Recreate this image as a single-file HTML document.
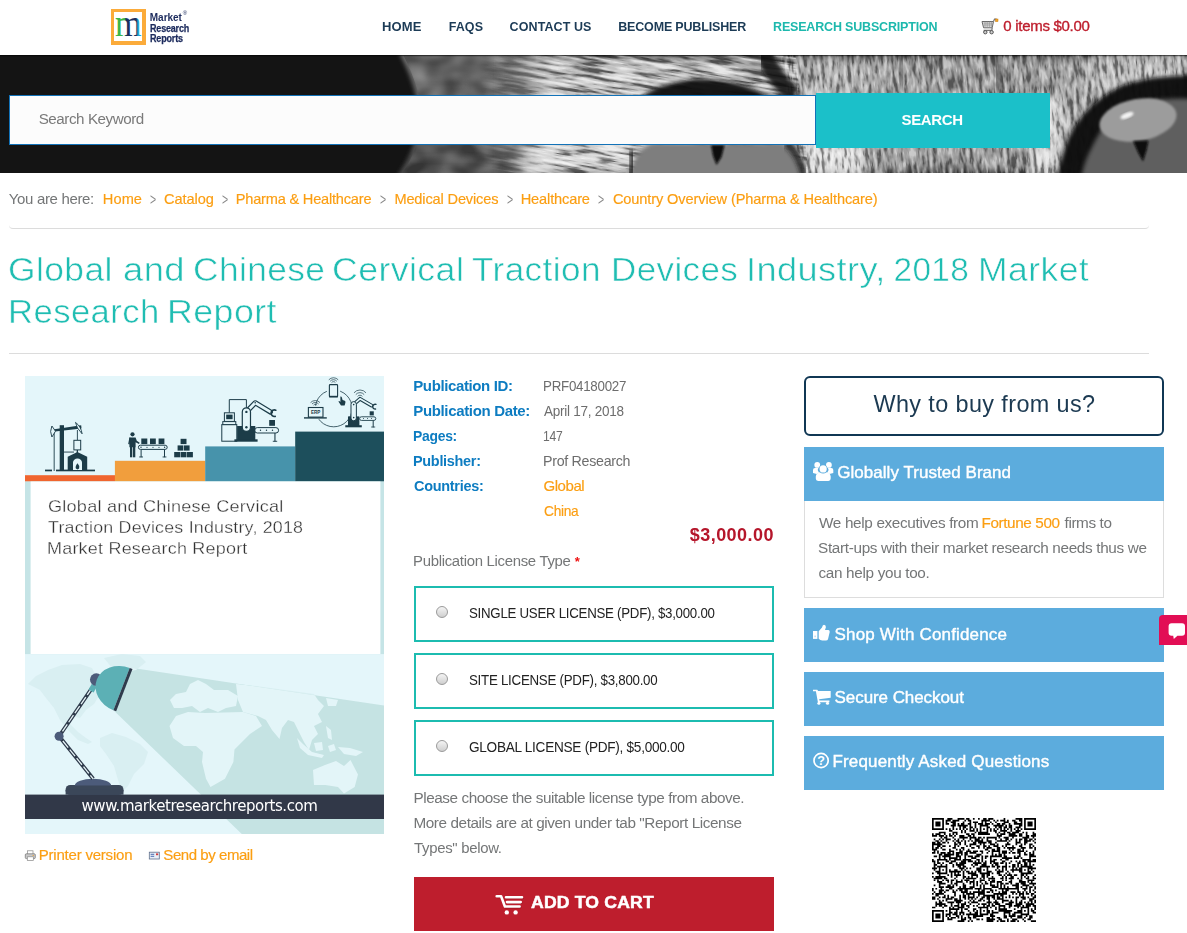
<!DOCTYPE html>
<html lang="en">
<head>
<meta charset="utf-8">
<title>Global and Chinese Cervical Traction Devices Industry, 2018 Market Research Report</title>
<style>
html,body{margin:0;padding:0;background:#fff;}
body{width:1187px;height:933px;position:relative;overflow:hidden;font-family:"Liberation Sans",sans-serif;color:#777;}
.abs{position:absolute;}
.t{position:absolute;white-space:nowrap;line-height:20px;height:20px;display:block;margin:0;padding:0;text-decoration:none;font-weight:normal;}
a.t{cursor:pointer;}
#banner{left:0;top:55px;width:1187px;height:117.5px;background:#141414;overflow:hidden;}
#sinput{left:9px;top:95px;width:805px;height:48px;border:1px solid #1272b8;background:#fcfcfc;}
#sbtn{left:816px;top:93px;width:234px;height:55px;background:#1bc0c9;}
.hr{height:1px;background:#dcdcdc;left:9px;width:1140px;}
.lic{left:414px;width:356px;height:52px;border:2px solid #1cbcb0;background:#fff;}
.radio{width:10px;height:10px;border:1px solid #9a9a9a;border-radius:50%;background:linear-gradient(#f4f4f4,#cfcfcf);left:436px;}
#cartbtn{left:414px;top:876.8px;width:360px;height:54.6px;background:#be1e2d;}
#why{left:804px;top:375.5px;width:356px;height:56.5px;border:2px solid #103754;border-radius:6px;background:#fff;}
.ph{left:804px;width:360px;height:53.5px;background:#5cacdd;}
#pbody{left:804px;top:500.5px;width:358px;height:96px;border:1px solid #ddd;border-top:none;background:#fff;}
#chat{left:1159px;top:615px;width:28px;height:30px;background:#e20e55;border-radius:4px 0 0 0;}
</style>
</head>
<body>
<!-- header -->
<div class="abs" id="logo" style="left:110.8px;top:8.8px;width:34.9px;height:36px;background:#fbab3a;"></div><div class="abs" style="left:114.2px;top:12.2px;width:28.1px;height:29.2px;background:#fff;"></div>
<svg class="abs" style="left:112px;top:8px;" width="34" height="38" viewBox="0 0 34 38">
<defs><linearGradient id="mg" x1="0" x2="1" y1="0" y2="0"><stop offset="0" stop-color="#3bb54a"/><stop offset="0.36" stop-color="#3bb54a"/><stop offset="0.42" stop-color="#1c2f5e"/><stop offset="0.8" stop-color="#1c2f5e"/><stop offset="0.87" stop-color="#1ea7d4"/><stop offset="1" stop-color="#1ea7d4"/></linearGradient></defs>
<text x="2.9" y="27.5" font-family="Liberation Serif, serif" font-size="38.5" fill="url(#mg)" textLength="26.6" lengthAdjust="spacingAndGlyphs">m</text>
</svg>

<svg class="abs" style="left:981px;top:18px;" width="18" height="17" viewBox="0 0 18 17">
<path d="M1 3.5h11.5l-1.300 6.300H2.600z" fill="#dcdcdc" stroke="#6a6a6a" stroke-width="1"/>
<path d="M2.5 5.2h9M2.8 7h8.6M4 3.5v6M6.2 3.5v6M8.4 3.5v6M10.4 3.5v6" stroke="#8f8f8f" stroke-width="0.6"/>
<path d="M12.5 3.5l1-2.3h2.2M11.2 9.8l-0.4 2.5H2.6" fill="none" stroke="#777" stroke-width="1.2"/>
<circle cx="4.3" cy="14.2" r="1.7" fill="#ccc" stroke="#555" stroke-width="1"/><circle cx="10.6" cy="14.2" r="1.7" fill="#ccc" stroke="#555" stroke-width="1"/>
<rect x="14.400" y="1" width="2.600" height="2.600" fill="#f5a623" stroke="#c77a10" stroke-width="0.500"/>
</svg>
<!-- banner -->
<div class="abs" id="banner">
<svg class="abs" style="left:0;top:0;" width="1187" height="118" viewBox="0 0 1187 118">
<defs>
<filter id="furH" x="0" y="0" width="100%" height="100%" color-interpolation-filters="sRGB">
<feTurbulence type="fractalNoise" baseFrequency="0.03 0.26" numOctaves="3" seed="11"/>
<feColorMatrix type="matrix" values="2.6 0 0 0 -0.8  2.6 0 0 0 -0.8  2.6 0 0 0 -0.8  2.6 0 0 0 -0.8"/>
<feComponentTransfer><feFuncR type="table" tableValues="0.05 0.1 0.9 1"/><feFuncG type="table" tableValues="0.05 0.1 0.9 1"/><feFuncB type="table" tableValues="0.05 0.1 0.9 1"/><feFuncA type="table" tableValues="0.6 0.28 0.03 0.28 0.6"/></feComponentTransfer>
<feGaussianBlur stdDeviation="0.45"/>
</filter>
<filter id="furV" x="0" y="0" width="100%" height="100%" color-interpolation-filters="sRGB">
<feTurbulence type="fractalNoise" baseFrequency="0.27 0.06" numOctaves="3" seed="5"/>
<feColorMatrix type="matrix" values="2.6 0 0 0 -0.8  2.6 0 0 0 -0.8  2.6 0 0 0 -0.8  2.6 0 0 0 -0.8"/>
<feComponentTransfer><feFuncR type="table" tableValues="0.05 0.1 0.9 1"/><feFuncG type="table" tableValues="0.05 0.1 0.9 1"/><feFuncB type="table" tableValues="0.05 0.1 0.9 1"/><feFuncA type="table" tableValues="0.5 0.22 0.03 0.2 0.45"/></feComponentTransfer>
<feGaussianBlur stdDeviation="0.45"/>
</filter>
<filter id="mott" x="0" y="0" width="100%" height="100%" color-interpolation-filters="sRGB"><feTurbulence type="fractalNoise" baseFrequency="0.035 0.05" numOctaves="2" seed="3"/><feColorMatrix type="matrix" values="1.6 0 0 0 -0.4  1.6 0 0 0 -0.4  1.6 0 0 0 -0.4  0 0 0 0 1"/></filter><filter id="b2"><feGaussianBlur stdDeviation="2"/></filter>
<filter id="b3"><feGaussianBlur stdDeviation="3"/></filter>
<filter id="b6"><feGaussianBlur stdDeviation="6"/></filter>
<filter id="b1"><feGaussianBlur stdDeviation="1"/></filter>
<linearGradient id="blobG" x1="0" x2="0" y1="0" y2="1"><stop offset="0" stop-color="#707070"/><stop offset="1" stop-color="#4a4a4a"/></linearGradient>
<linearGradient id="furG" x1="0" x2="1" y1="0" y2="0"><stop offset="0" stop-color="#5c5c5c"/><stop offset="0.06" stop-color="#c4c4c4"/><stop offset="0.3" stop-color="#c8c8c8"/><stop offset="0.42" stop-color="#a2a2a2"/><stop offset="0.46" stop-color="#b8b8b8"/><stop offset="0.62" stop-color="#9a9a9a"/><stop offset="0.78" stop-color="#a0a0a0"/><stop offset="1" stop-color="#b4b4b4"/></linearGradient>
<linearGradient id="mHg" x1="0" x2="1" y1="0" y2="0"><stop offset="0" stop-color="#000"/><stop offset="1" stop-color="#fff"/></linearGradient><mask id="cH"><rect x="480" y="-5" width="80" height="130" fill="url(#mHg)"/><path d="M559 -5h236l14 128H559z" fill="#fff"/></mask>
<clipPath id="cB"><path d="M400 -6Q420 30 422 62 420 95 398 124H550V-6z"/></clipPath><clipPath id="cV"><path d="M780 -5h410v128H800z"/></clipPath>
</defs>
<rect width="1187" height="118" fill="#141414"/>
<!-- out-of-focus blob -->
<path d="M397 -6Q417 30 419 62 417 95 395 124H550V-6z" fill="url(#blobG)" filter="url(#b2)"/><g clip-path="url(#cB)"><rect x="396" y="0" width="140" height="118" filter="url(#mott)" opacity="0.3"/></g>
<!-- fur base -->
<rect x="505" y="0" width="682" height="118" fill="url(#furG)" filter="url(#b6)"/>
<rect x="802" y="88" width="62" height="34" fill="#f0f0f0" opacity="0.85" filter="url(#b6)"/><rect x="520" y="92" width="112" height="30" fill="#f0f0f0" opacity="0.6" filter="url(#b6)"/>
<rect x="1030" y="40" width="34" height="90" fill="#f0f0f0" opacity="0.7" filter="url(#b6)"/>
<rect x="1090" y="-6" width="100" height="34" fill="#cfcfcf" opacity="0.6" filter="url(#b6)"/>
<g mask="url(#cH)"><g transform="rotate(9 650 60)"><rect x="460" y="-80" width="400" height="280" filter="url(#furH)"/></g></g>
<g clip-path="url(#cV)"><g transform="rotate(-5 980 60)"><rect x="740" y="-40" width="500" height="200" filter="url(#furV)"/></g></g>
<!-- dark stripes -->
<path d="M764 -4q8 26 30 44" fill="none" stroke="#101010" stroke-width="17" opacity="0.85" filter="url(#b2)"/>
<path d="M1002 -4q-8 18-4 40" fill="none" stroke="#1c1c1c" stroke-width="9" opacity="0.4" filter="url(#b3)"/>
<path d="M900 -4q4 18 0 40" fill="none" stroke="#1c1c1c" stroke-width="9" opacity="0.3" filter="url(#b3)"/>
<!-- left eye -->
<path d="M640 42q20-14 56-18 46 0 76 20v8H640z" fill="#101010" opacity="0.95" filter="url(#b2)"/>
<path d="M632 122q-2-24 20-34h130q18 12 24 34z" fill="#7e7e7e" filter="url(#b2)"/>
<path d="M786 88q14 12 18 32" fill="none" stroke="#1a1a1a" stroke-width="7" opacity="0.85" filter="url(#b2)"/>
<path d="M632 96q2 14-2 26" fill="none" stroke="#1a1a1a" stroke-width="6" opacity="0.8" filter="url(#b2)"/>
<path d="M711 90h13.5l-3 12-5 8-3.5-9z" fill="#0b0b0b" filter="url(#b1)"/>
<!-- right eye -->
<path d="M1195 20q-40 0-72 10-38 18-54 52-8 18-12 40h138z" fill="#0c0c0c" opacity="0.97" filter="url(#b2)"/>
<path d="M1195 44q-36-2-66 6-24 14-36 40-8 14-12 32h114z" fill="#5e5e5e" filter="url(#b2)"/>
<ellipse cx="1138" cy="65" rx="39" ry="21" fill="#9c9c9c" filter="url(#b1)" transform="rotate(-10 1138 65)"/>
<ellipse cx="1127" cy="60.5" rx="7" ry="2.8" fill="#f4f4f4" filter="url(#b1)" transform="rotate(-22 1127 60.5)"/>
<path d="M1133 86l15.5-.5-2 10-3.5 11-5-9z" fill="#090909" filter="url(#b1)"/>
<rect x="0" y="0" width="1187" height="1.2" fill="#000" opacity="0.55"/>
</svg>

</div>
<div class="abs" id="sinput"></div>
<div class="abs" id="sbtn"></div>
<!-- breadcrumb rules -->
<div class="abs" style="left:9px;top:223px;width:1140px;height:5px;border-bottom:1px solid #dcdcdc;border-radius:0 0 4px 4px;box-sizing:content-box;"></div>
<div class="abs hr" style="top:353.2px;"></div>
<!-- product image -->
<svg class="abs" style="left:25px;top:376px;" width="359.2" height="458" viewBox="25 376 359.2 458">
<defs>
<clipPath id="cone"><path d="M129.5 667.6L384.2 705.6V834H241.8L114 710.8z"/></clipPath>
<g id="land">
<path d="M28 684l8-8 12-6 14-5 18-1 12 4 4 8 8 4 6 10-10 4-6 10-8 6-6 8-8-2-2 8 8 8 8 6 6 4-4 2-10-4-10-10-8-10-6-12-8-10-6-8z"/>
<path d="M104 658l18-4 18 2 6 6-10 8-12 2-12-4z"/>
<path d="M100 738l12-5 14 4 14 7 8 8-4 12-10 10-6 12-6 6-4-12-4-14-8-12-6-8z"/>
<path d="M170 700l6-6 10-2 4-8 8-4 8 4 8 6h14l10 6-2 10-10 2-8 4-10-4-8 4-8-6-10 2-8 0z"/>
<path d="M176 716l12-4 17 1 38-1 13 4 6 10-12 8-10 10-5.500 5.500-1.100 12.500-8.400 16.800-14.500 8.300-4.500-8.300-4-16.800 1-10-7-6h-12l-11-8-3.500-12z"/>
<path d="M236 684l20 2 58 8 4 6 6 6-6 8 4 8-8 4 4 8-6 6-3 10-5-8-6-12-4-8-6-2-6 8-2.500 11-7.500-9-6-10-8-4-15-4-5-12z"/>
<path d="M326 698l12 2-2 6h-8z"/><path d="M326 726l5 4 1 10-4-2z"/>
<path d="M297 738l6 6 9 8 12 3-2 3-14-3-8-7z"/><path d="M314 743l8-1 1 8-7 1z"/><path d="M328 746l6-2 2 6-6 2z"/><path d="M338 747l12 1 13 4-7 4-12-2z"/>
<path d="M313 770l12-5 11-4 8 5 6.500-6 7.500 14.600-3.300 12.400-10.700 6.400-6-6.400-12.600-2-11.400 0z"/>
</g>
</defs>
<rect x="25" y="376" width="359.2" height="458" fill="#e4f6fa"/>
<!-- steps -->
<rect x="25" y="475.2" width="90" height="6.4" fill="#f0652f"/>
<rect x="114.9" y="460.8" width="90.4" height="20.8" fill="#f19e3d"/>
<rect x="205.2" y="446.4" width="90.1" height="35.2" fill="#4793ab"/>
<rect x="295.2" y="431.6" width="89" height="50" fill="#1d4f5c"/>
<!-- white panel -->
<rect x="25" y="481.5" width="359.2" height="172.6" fill="#c5e4e6"/>
<rect x="30.6" y="481.5" width="349.8" height="172.5" fill="#fff"/>
<!-- pump jack -->
<g fill="#1c3c48" stroke="none">
<rect x="45" y="469.6" width="7" height="1.7"/><rect x="56" y="469.6" width="39" height="1.7"/>
<rect x="53.7" y="430.5" width="0.9" height="40.5"/>
<rect x="59.7" y="425.2" width="4.3" height="45.3"/>
<path d="M52.6 429.6l28.6-4.4.3 3.2-28.6 3.4z"/>
<rect x="64" y="451.6" width="10" height="0.9"/>
<rect x="76.9" y="430" width="0.9" height="10"/>
<rect x="76.7" y="450" width="1.3" height="3.5"/>
<path d="M67.7 470.3v-13.6l9.7-4.6 9.8 4.6v13.6z"/>
</g>
<path d="M55.5 431.2l-3.6-5.2q-2.6 5.4 0 11z" fill="#e4f6fa" stroke="#1c3c48" stroke-width="0.9" stroke-linejoin="round"/>
<path d="M77.5 428l-2-5.6q5.6 4 6.6 11.4z" fill="#e4f6fa" stroke="#1c3c48" stroke-width="0.9" stroke-linejoin="round"/>
<rect x="73.9" y="440.3" width="6.8" height="9.6" fill="#e4f6fa" stroke="#1c3c48" stroke-width="1"/>
<path d="M73 470v-7.5a4.5 4 0 0 1 9 0v7.5z" fill="#e4f6fa"/>
<path d="M77.5 463.2q2.6 2.6 1.6 5.4-1.6 1.6-3.2 0-1-2 1.6-5.4z" fill="#1c3c48"/>
<!-- worker + conveyor -->
<g fill="#1c3c48">
<circle cx="132.5" cy="434.3" r="2.1"/>
<path d="M129.4 437.4h6.2l1.2 3.4 2.9 2-.7 1.2-3.4-1.7v5h-6.2z"/>
<path d="M128.2 444l1.2-6.6 1.2.4-1 6.6z"/>
<rect x="130" y="447" width="2.3" height="10.3"/><rect x="133" y="447" width="2.3" height="10.3"/>
<rect x="141.3" y="438.5" width="6" height="5.6"/><rect x="150" y="438.5" width="5.8" height="5.6"/><rect x="158.6" y="438.5" width="5.8" height="5.6"/>
<rect x="140.6" y="449.6" width="1" height="7.6"/><rect x="164" y="449.6" width="1" height="7.6"/>
<rect x="139.2" y="456.5" width="3.8" height="0.9"/><rect x="162.6" y="456.5" width="3.8" height="0.9"/>
<rect x="180.6" y="438.8" width="5.9" height="5.3"/>
<rect x="177.6" y="445.4" width="5.7" height="5.2"/><rect x="183.9" y="445.4" width="5.7" height="5.2"/>
<rect x="174.2" y="452" width="5.9" height="5.3"/><rect x="180.6" y="452" width="5.9" height="5.3"/><rect x="187" y="452" width="5.9" height="5.3"/>
</g>
<rect x="138.4" y="445.2" width="28.8" height="4.2" rx="2.1" fill="#e4f6fa" stroke="#1c3c48" stroke-width="1"/>
<g fill="#1c3c48"><circle cx="141" cy="447.3" r="0.7"/><circle cx="147" cy="447.3" r="0.6"/><circle cx="153" cy="447.3" r="0.6"/><circle cx="159" cy="447.3" r="0.6"/><circle cx="164.6" cy="447.3" r="0.7"/></g>
<!-- robot station 1 -->
<g fill="#e4f6fa" stroke="#1c3c48" stroke-width="1">
<rect x="221.8" y="424.6" width="15" height="16.6"/>
<rect x="222.8" y="421.6" width="13" height="3"/>
<rect x="224.4" y="412.8" width="10" height="8.6"/>
<path d="M229.3 412.6v-13h17.1v9" fill="none"/>
<rect x="254.6" y="427.6" width="24" height="5.4" rx="2.7"/>
</g>
<g fill="#1c3c48">
<rect x="226.2" y="414.6" width="6.4" height="4.6"/>
<rect x="237.1" y="426" width="18.2" height="14.4"/>
<rect x="234.4" y="439.3" width="23.2" height="2.4"/>
<rect x="269.2" y="420" width="5.8" height="5.8"/>
<rect x="274.4" y="433" width="1.1" height="8.6"/><rect x="272.8" y="440.8" width="4.4" height="0.9"/>
<circle cx="260.5" cy="430.3" r="0.7"/><circle cx="266.5" cy="430.3" r="0.7"/><circle cx="272.5" cy="430.3" r="0.7"/>
</g>
<g fill="none" stroke-linecap="round" stroke-linejoin="round">
<path d="M246.4 411.9l8.8-9.1 15.2 9.1" stroke="#1c3c48" stroke-width="5.2"/>
<path d="M246.4 411.9l8.8-9.1 15.2 9.1" stroke="#e4f6fa" stroke-width="2.8"/>
<path d="M275.8 410.2a3.3 3.3 0 1 0-.6 6.2" stroke="#1c3c48" stroke-width="1.7"/>
</g>
<rect x="242.3" y="407.8" width="8.2" height="23.6" rx="4.1" fill="#e4f6fa" stroke="#1c3c48" stroke-width="1.2"/>
<circle cx="246.4" cy="411.9" r="1.2" fill="#1c3c48"/><circle cx="246.4" cy="427.3" r="1.2" fill="#1c3c48"/><circle cx="255.2" cy="402.8" r="0.8" fill="#1c3c48"/>
<!-- IoT group -->
<circle cx="333.7" cy="408.4" r="18.4" fill="none" stroke="#1c3c48" stroke-width="0.8"/>
<rect x="327" y="382" width="13" height="17.4" fill="#e4f6fa"/>
<rect x="329.4" y="384.6" width="8.2" height="12.2" rx="0.8" fill="#e4f6fa" stroke="#1c3c48" stroke-width="1.1"/>
<rect x="329" y="395.8" width="9" height="1.6" fill="#1c3c48"/>
<g fill="none" stroke="#1c3c48" stroke-width="0.7">
<path d="M331.6 382.6a2.4 2.4 0 0 1 3.8 0M330.2 381.2a4.4 4.4 0 0 1 6.6 0M328.8 379.8a6.4 6.4 0 0 1 9.4 0"/>
<path d="M313.4 405.4a2.4 2.4 0 0 1 3.8 0M312 404a4.4 4.4 0 0 1 6.6 0M310.6 402.6a6.4 6.4 0 0 1 9.4 0"/>
<path d="M357.6 396.4a3 3 0 0 1 4.8 0M355.8 394.6a5.4 5.4 0 0 1 8.4 0M354 392.8a7.8 7.8 0 0 1 12 0"/>
</g>
<path d="M340.4 396.6q1-.6 1.4.6l.8 2.8 2.2.8q1 .6.6 2l-.8 2.6h-3.6l-2.4-3.6q-.2-1 1-.6l.8.8z" fill="#1c3c48"/>
<rect x="306" y="405.6" width="19.4" height="13.6" fill="#e4f6fa"/>
<rect x="308.4" y="407.5" width="14.6" height="9.6" fill="#e4f6fa" stroke="#1c3c48" stroke-width="1.1"/>
<rect x="304" y="417.2" width="22.8" height="1.4" fill="#1c3c48"/>
<text x="315.7" y="414.2" font-family="Liberation Sans, sans-serif" font-size="4.6" font-weight="bold" fill="#1c3c48" text-anchor="middle">ERP</text>
<g fill="#1c3c48">
<rect x="348" y="416.4" width="11.4" height="9.8"/><rect x="345.3" y="425.2" width="16.5" height="2.1"/>
<rect x="369.7" y="411.3" width="4.1" height="4.1"/>
<rect x="372.7" y="420.2" width="1" height="7.2"/><rect x="371.2" y="426.6" width="4" height="0.8"/>
</g>
<rect x="359.6" y="416.8" width="16.2" height="3.6" rx="1.8" fill="#e4f6fa" stroke="#1c3c48" stroke-width="0.9"/>
<g fill="#1c3c48"><circle cx="363.6" cy="418.6" r="0.5"/><circle cx="367.6" cy="418.6" r="0.5"/><circle cx="371.6" cy="418.6" r="0.5"/></g>
<g fill="none" stroke-linecap="round" stroke-linejoin="round">
<path d="M353.7 404.4l6.3-5.6 11.6 6.8" stroke="#1c3c48" stroke-width="3.8"/>
<path d="M353.7 404.4l6.3-5.6 11.6 6.8" stroke="#e4f6fa" stroke-width="1.7"/>
<path d="M376 404.4a2.4 2.4 0 1 0-.4 4.6" stroke="#1c3c48" stroke-width="1.3"/>
</g>
<rect x="351" y="401.6" width="5.4" height="19.2" rx="2.7" fill="#e4f6fa" stroke="#1c3c48" stroke-width="1"/>
<circle cx="353.7" cy="404.6" r="0.8" fill="#1c3c48"/><circle cx="353.7" cy="417.6" r="0.8" fill="#1c3c48"/>
<!-- bottom: map + lamp -->
<use href="#land" fill="#d9eff2"/>
<path d="M129.5 667.6L384.2 705.6V834H241.8L114 710.8z" fill="#c5e3e3"/>
<g clip-path="url(#cone)"><use href="#land" fill="#e3f5f8"/></g>
<rect x="25" y="794.6" width="359.2" height="24.4" fill="#313848"/>
<rect x="65.6" y="785" width="57.9" height="10" rx="4.6" fill="#3b4759"/>
<rect x="65.6" y="790" width="57.9" height="4.7" fill="#3b4759"/>
<path d="M74.8 785.6a18.2 6.9 0 0 1 36.4 0z" fill="#4c5b7a"/>
<g fill="none">
<path d="M59.1 736.3L93.2 778.8M59.1 736.3L92.1 687.9" stroke="#2f3b4c" stroke-width="3.8"/>
<path d="M59.1 736.3L93.2 778.8M59.1 736.3L92.1 687.9" stroke="#e6f3f6" stroke-width="1.3" stroke-dasharray="8.5 2.5" stroke-dashoffset="-6"/>
</g>
<circle cx="59.1" cy="736.3" r="4.5" fill="#4c5b7a"/>
<path d="M88.6 689.4l3.2-5.6 5 3-3.2 5.6z" fill="#5cb0b5"/>
<circle cx="96.3" cy="679.6" r="6.3" fill="#4c5b7a"/>
<path d="M129.700 668A26.500 22.600 21.100 0 0 113.400 710.200z" fill="#5cb0b5"/>
<path d="M129.7 668l-2.8-1.1-16.3 42.2 2.8 1.1z" fill="#2f3b4c" transform="translate(2.8,1.1)"/>
</svg>

<!-- license boxes -->
<div class="abs lic" style="top:586.4px;"></div>
<div class="abs lic" style="top:653.2px;"></div>
<div class="abs lic" style="top:720.2px;"></div>
<div class="abs radio" style="top:606.3px;"></div>
<div class="abs radio" style="top:673.3px;"></div>
<div class="abs radio" style="top:740.3px;"></div>
<div class="abs" id="cartbtn"></div>
<!-- right column -->
<div class="abs" id="why"></div>
<div class="abs ph" style="top:447px;"></div>
<div class="abs" id="pbody"></div>
<div class="abs ph" style="top:608px;"></div>
<div class="abs ph" style="top:672px;"></div>
<div class="abs ph" style="top:736px;"></div>
<svg class="abs" style="left:0;top:0;pointer-events:none;" width="1187" height="933" viewBox="0 0 1187 933">
<!-- users -->
<g fill="#fff">
<circle cx="817.25" cy="464.95" r="2.9"/><circle cx="828.9" cy="464.95" r="2.9"/>
<path d="M813 472.9v-3a2 2 0 0 1 2-2h3.4q-1.6 2.4 1 4.6-1.6.2-2.6 1.4z"/>
<path d="M833.3 472.9v-3a2 2 0 0 0-2-2h-3.4q1.6 2.4-1 4.6 1.6.2 2.6 1.400z"/>
<circle cx="823.15" cy="468.9" r="4.1" fill="#5cacdd"/>
<circle cx="823.15" cy="468.9" r="3.6"/>
<path d="M815.8 478.6v-2.200q.6-3.600 3.800-4.200 3.500 2.700 7.100 0 3.400.6 4 4.200v2.200a2.300 2.300 0 0 1-2.300 2.300h-10.300a2.300 2.300 0 0 1-2.300-2.300z"/>
<!-- thumbs up -->
<rect x="813" y="631" width="4.400" height="7.900"/>
<path d="M818.700 631.300l3.300-3.800q.500-2.800 2-2.800 2 .3 1.900 2.600l-.9 2.600h3.500q1.500.4 1.200 2.100l-1.700 7.200q-.5 1.300-2.100 1.300h-3.700q-2-.3-3.500-1.700z"/>
<!-- cart -->
<path d="M813 689.700h4.300l.8 1.400h12.600v6.700l-11.600 1.400.3 1.400h10v1.600h-11.500l-2-11h-2.900z"/>
<circle cx="818.900" cy="703.300" r="1.550"/><circle cx="827.500" cy="703.300" r="1.550"/>
</g>
<rect x="814.600" y="635.600" width="1" height="1.600" fill="#5cacdd" opacity="0.6"/>
<!-- question circle -->
<circle cx="821.100" cy="760.500" r="7.100" fill="none" stroke="#fff" stroke-width="1.700"/>
<text x="821.100" y="765.200" font-family="Liberation Sans, sans-serif" font-size="12.500" font-weight="bold" fill="#fff" text-anchor="middle">?</text>
<!-- add to cart icon -->
<g fill="none" stroke="#7d0f1a" stroke-opacity="0.55" stroke-width="2.400" stroke-linecap="round" stroke-linejoin="round" transform="translate(0.5,0.8)">
<path d="M496.700 896.200h4.400l3.800 10.300h14.700M506 897.300h16M507 902.100h13.700"/>
</g>
<g fill="none" stroke="#fff" stroke-width="2.600" stroke-linecap="round" stroke-linejoin="round">
<path d="M496.700 896.200h4.400l3.800 10.300h14.700M506 897.300h16M507 902.100h13.700"/>
</g>
<circle cx="506.800" cy="912.400" r="2.200" fill="#fff"/><circle cx="515.600" cy="912.400" r="2.200" fill="#fff"/>
<!-- printer icon -->
<g>
<rect x="27.500" y="850.800" width="5.500" height="3.600" fill="#fff" stroke="#8a8a8a" stroke-width="0.700"/>
<rect x="25.300" y="853.800" width="10" height="4.800" rx="1" fill="#c9c9c9" stroke="#6f6f6f" stroke-width="0.700"/>
<rect x="27.300" y="856.800" width="6" height="3.800" fill="#fff" stroke="#8a8a8a" stroke-width="0.700"/>
<rect x="32.600" y="855" width="1.300" height="0.900" fill="#e9a23b"/>
</g>
<!-- mail icon -->
<g>
<rect x="149.300" y="852.200" width="10" height="6.800" fill="#e8eef7" stroke="#5f6f8c" stroke-width="0.800"/>
<rect x="150.600" y="853.800" width="3.600" height="1" fill="#4b6cb0"/><rect x="150.600" y="855.800" width="3.600" height="1" fill="#4b6cb0"/>
<rect x="156" y="853.400" width="2.200" height="1.800" fill="#d23a3a"/>
</g>
</svg>

<svg class="abs" style="left:932px;top:818px;" width="104" height="104" viewBox="0 0 104 104"><rect width="104" height="104" fill="#fff"/><path fill="#000" d="M0.00 0.00h11.93v1.70h-11.93zM15.34 0.00h5.11v1.70h-5.11zM25.57 0.00h6.82v1.70h-6.82zM34.10 0.00h3.41v1.70h-3.41zM40.92 0.00h1.70v1.70h-1.70zM46.03 0.00h1.70v1.70h-1.70zM51.15 0.00h3.41v1.70h-3.41zM56.26 0.00h5.11v1.70h-5.11zM71.61 0.00h1.70v1.70h-1.70zM83.54 0.00h6.82v1.70h-6.82zM92.07 0.00h11.93v1.70h-11.93zM0.00 1.70h1.70v1.70h-1.70zM10.23 1.70h1.70v1.70h-1.70zM13.64 1.70h5.11v1.70h-5.11zM20.46 1.70h6.82v1.70h-6.82zM32.39 1.70h1.70v1.70h-1.70zM35.80 1.70h3.41v1.70h-3.41zM49.44 1.70h8.52v1.70h-8.52zM61.38 1.70h1.70v1.70h-1.70zM64.79 1.70h1.70v1.70h-1.70zM68.20 1.70h5.11v1.70h-5.11zM75.02 1.70h1.70v1.70h-1.70zM80.13 1.70h3.41v1.70h-3.41zM86.95 1.70h3.41v1.70h-3.41zM92.07 1.70h1.70v1.70h-1.70zM102.30 1.70h1.70v1.70h-1.70zM0.00 3.41h1.70v1.70h-1.70zM3.41 3.41h5.11v1.70h-5.11zM10.23 3.41h1.70v1.70h-1.70zM13.64 3.41h1.70v1.70h-1.70zM18.75 3.41h5.11v1.70h-5.11zM30.69 3.41h1.70v1.70h-1.70zM37.51 3.41h1.70v1.70h-1.70zM40.92 3.41h5.11v1.70h-5.11zM49.44 3.41h1.70v1.70h-1.70zM52.85 3.41h1.70v1.70h-1.70zM57.97 3.41h1.70v1.70h-1.70zM63.08 3.41h1.70v1.70h-1.70zM71.61 3.41h5.11v1.70h-5.11zM81.84 3.41h3.41v1.70h-3.41zM88.66 3.41h1.70v1.70h-1.70zM92.07 3.41h1.70v1.70h-1.70zM95.48 3.41h5.11v1.70h-5.11zM102.30 3.41h1.70v1.70h-1.70zM0.00 5.11h1.70v1.70h-1.70zM3.41 5.11h5.11v1.70h-5.11zM10.23 5.11h1.70v1.70h-1.70zM13.64 5.11h3.41v1.70h-3.41zM20.46 5.11h3.41v1.70h-3.41zM25.57 5.11h1.70v1.70h-1.70zM28.98 5.11h3.41v1.70h-3.41zM35.80 5.11h3.41v1.70h-3.41zM42.62 5.11h1.70v1.70h-1.70zM46.03 5.11h5.11v1.70h-5.11zM52.85 5.11h5.11v1.70h-5.11zM59.67 5.11h1.70v1.70h-1.70zM64.79 5.11h3.41v1.70h-3.41zM69.90 5.11h3.41v1.70h-3.41zM76.72 5.11h1.70v1.70h-1.70zM81.84 5.11h8.52v1.70h-8.52zM92.07 5.11h1.70v1.70h-1.70zM95.48 5.11h5.11v1.70h-5.11zM102.30 5.11h1.70v1.70h-1.70zM0.00 6.82h1.70v1.70h-1.70zM3.41 6.82h5.11v1.70h-5.11zM10.23 6.82h1.70v1.70h-1.70zM18.75 6.82h5.11v1.70h-5.11zM25.57 6.82h10.23v1.70h-10.23zM37.51 6.82h1.70v1.70h-1.70zM42.62 6.82h1.70v1.70h-1.70zM47.74 6.82h8.52v1.70h-8.52zM61.38 6.82h10.23v1.70h-10.23zM73.31 6.82h1.70v1.70h-1.70zM76.72 6.82h3.41v1.70h-3.41zM86.95 6.82h3.41v1.70h-3.41zM92.07 6.82h1.70v1.70h-1.70zM95.48 6.82h5.11v1.70h-5.11zM102.30 6.82h1.70v1.70h-1.70zM0.00 8.52h1.70v1.70h-1.70zM10.23 8.52h1.70v1.70h-1.70zM20.46 8.52h1.70v1.70h-1.70zM27.28 8.52h1.70v1.70h-1.70zM30.69 8.52h3.41v1.70h-3.41zM37.51 8.52h3.41v1.70h-3.41zM42.62 8.52h1.70v1.70h-1.70zM47.74 8.52h1.70v1.70h-1.70zM54.56 8.52h3.41v1.70h-3.41zM63.08 8.52h1.70v1.70h-1.70zM66.49 8.52h3.41v1.70h-3.41zM71.61 8.52h3.41v1.70h-3.41zM76.72 8.52h3.41v1.70h-3.41zM83.54 8.52h5.11v1.70h-5.11zM92.07 8.52h1.70v1.70h-1.70zM102.30 8.52h1.70v1.70h-1.70zM0.00 10.23h11.93v1.70h-11.93zM13.64 10.23h1.70v1.70h-1.70zM17.05 10.23h1.70v1.70h-1.70zM20.46 10.23h1.70v1.70h-1.70zM23.87 10.23h1.70v1.70h-1.70zM27.28 10.23h1.70v1.70h-1.70zM30.69 10.23h1.70v1.70h-1.70zM34.10 10.23h1.70v1.70h-1.70zM37.51 10.23h1.70v1.70h-1.70zM40.92 10.23h1.70v1.70h-1.70zM44.33 10.23h1.70v1.70h-1.70zM47.74 10.23h1.70v1.70h-1.70zM51.15 10.23h1.70v1.70h-1.70zM54.56 10.23h1.70v1.70h-1.70zM57.97 10.23h1.70v1.70h-1.70zM61.38 10.23h1.70v1.70h-1.70zM64.79 10.23h1.70v1.70h-1.70zM68.20 10.23h1.70v1.70h-1.70zM71.61 10.23h1.70v1.70h-1.70zM75.02 10.23h1.70v1.70h-1.70zM78.43 10.23h1.70v1.70h-1.70zM81.84 10.23h1.70v1.70h-1.70zM85.25 10.23h1.70v1.70h-1.70zM88.66 10.23h1.70v1.70h-1.70zM92.07 10.23h11.93v1.70h-11.93zM17.05 11.93h3.41v1.70h-3.41zM28.98 11.93h1.70v1.70h-1.70zM32.39 11.93h1.70v1.70h-1.70zM37.51 11.93h5.11v1.70h-5.11zM44.33 11.93h1.70v1.70h-1.70zM47.74 11.93h1.70v1.70h-1.70zM54.56 11.93h1.70v1.70h-1.70zM57.97 11.93h1.70v1.70h-1.70zM61.38 11.93h3.41v1.70h-3.41zM68.20 11.93h6.82v1.70h-6.82zM78.43 11.93h1.70v1.70h-1.70zM83.54 11.93h5.11v1.70h-5.11zM6.82 13.64h6.82v1.70h-6.82zM20.46 13.64h5.11v1.70h-5.11zM28.98 13.64h1.70v1.70h-1.70zM32.39 13.64h1.70v1.70h-1.70zM42.62 13.64h1.70v1.70h-1.70zM46.03 13.64h10.23v1.70h-10.23zM63.08 13.64h1.70v1.70h-1.70zM66.49 13.64h1.70v1.70h-1.70zM71.61 13.64h1.70v1.70h-1.70zM75.02 13.64h3.41v1.70h-3.41zM80.13 13.64h6.82v1.70h-6.82zM90.36 13.64h1.70v1.70h-1.70zM93.77 13.64h1.70v1.70h-1.70zM100.59 13.64h1.70v1.70h-1.70zM0.00 15.34h1.70v1.70h-1.70zM3.41 15.34h5.11v1.70h-5.11zM11.93 15.34h1.70v1.70h-1.70zM17.05 15.34h1.70v1.70h-1.70zM20.46 15.34h1.70v1.70h-1.70zM23.87 15.34h1.70v1.70h-1.70zM34.10 15.34h3.41v1.70h-3.41zM39.21 15.34h3.41v1.70h-3.41zM46.03 15.34h11.93v1.70h-11.93zM64.79 15.34h1.70v1.70h-1.70zM68.20 15.34h5.11v1.70h-5.11zM76.72 15.34h6.82v1.70h-6.82zM86.95 15.34h3.41v1.70h-3.41zM93.77 15.34h1.70v1.70h-1.70zM100.59 15.34h3.41v1.70h-3.41zM0.00 17.05h5.11v1.70h-5.11zM6.82 17.05h5.11v1.70h-5.11zM13.64 17.05h1.70v1.70h-1.70zM17.05 17.05h3.41v1.70h-3.41zM22.16 17.05h1.70v1.70h-1.70zM27.28 17.05h5.11v1.70h-5.11zM35.80 17.05h3.41v1.70h-3.41zM40.92 17.05h1.70v1.70h-1.70zM64.79 17.05h5.11v1.70h-5.11zM76.72 17.05h8.52v1.70h-8.52zM86.95 17.05h3.41v1.70h-3.41zM93.77 17.05h3.41v1.70h-3.41zM98.89 17.05h5.11v1.70h-5.11zM8.52 18.75h1.70v1.70h-1.70zM11.93 18.75h3.41v1.70h-3.41zM20.46 18.75h1.70v1.70h-1.70zM27.28 18.75h8.52v1.70h-8.52zM37.51 18.75h6.82v1.70h-6.82zM46.03 18.75h3.41v1.70h-3.41zM51.15 18.75h1.70v1.70h-1.70zM54.56 18.75h10.23v1.70h-10.23zM66.49 18.75h1.70v1.70h-1.70zM71.61 18.75h5.11v1.70h-5.11zM80.13 18.75h1.70v1.70h-1.70zM90.36 18.75h6.82v1.70h-6.82zM100.59 18.75h1.70v1.70h-1.70zM1.70 20.46h1.70v1.70h-1.70zM6.82 20.46h1.70v1.70h-1.70zM10.23 20.46h1.70v1.70h-1.70zM13.64 20.46h5.11v1.70h-5.11zM22.16 20.46h1.70v1.70h-1.70zM25.57 20.46h1.70v1.70h-1.70zM30.69 20.46h1.70v1.70h-1.70zM37.51 20.46h1.70v1.70h-1.70zM42.62 20.46h5.11v1.70h-5.11zM49.44 20.46h1.70v1.70h-1.70zM54.56 20.46h1.70v1.70h-1.70zM63.08 20.46h1.70v1.70h-1.70zM68.20 20.46h1.70v1.70h-1.70zM73.31 20.46h3.41v1.70h-3.41zM78.43 20.46h1.70v1.70h-1.70zM83.54 20.46h1.70v1.70h-1.70zM86.95 20.46h3.41v1.70h-3.41zM92.07 20.46h3.41v1.70h-3.41zM97.18 20.46h3.41v1.70h-3.41zM102.30 20.46h1.70v1.70h-1.70zM3.41 22.16h3.41v1.70h-3.41zM8.52 22.16h1.70v1.70h-1.70zM13.64 22.16h1.70v1.70h-1.70zM20.46 22.16h1.70v1.70h-1.70zM23.87 22.16h3.41v1.70h-3.41zM28.98 22.16h1.70v1.70h-1.70zM32.39 22.16h1.70v1.70h-1.70zM35.80 22.16h1.70v1.70h-1.70zM39.21 22.16h1.70v1.70h-1.70zM42.62 22.16h8.52v1.70h-8.52zM54.56 22.16h5.11v1.70h-5.11zM64.79 22.16h10.23v1.70h-10.23zM76.72 22.16h1.70v1.70h-1.70zM83.54 22.16h1.70v1.70h-1.70zM86.95 22.16h1.70v1.70h-1.70zM92.07 22.16h6.82v1.70h-6.82zM100.59 22.16h1.70v1.70h-1.70zM0.00 23.87h3.41v1.70h-3.41zM5.11 23.87h3.41v1.70h-3.41zM10.23 23.87h3.41v1.70h-3.41zM15.34 23.87h1.70v1.70h-1.70zM22.16 23.87h1.70v1.70h-1.70zM25.57 23.87h3.41v1.70h-3.41zM32.39 23.87h1.70v1.70h-1.70zM40.92 23.87h3.41v1.70h-3.41zM46.03 23.87h8.52v1.70h-8.52zM56.26 23.87h3.41v1.70h-3.41zM63.08 23.87h1.70v1.70h-1.70zM75.02 23.87h1.70v1.70h-1.70zM83.54 23.87h5.11v1.70h-5.11zM92.07 23.87h3.41v1.70h-3.41zM102.30 23.87h1.70v1.70h-1.70zM0.00 25.57h10.23v1.70h-10.23zM22.16 25.57h3.41v1.70h-3.41zM27.28 25.57h1.70v1.70h-1.70zM32.39 25.57h1.70v1.70h-1.70zM37.51 25.57h6.82v1.70h-6.82zM47.74 25.57h1.70v1.70h-1.70zM51.15 25.57h1.70v1.70h-1.70zM57.97 25.57h5.11v1.70h-5.11zM64.79 25.57h1.70v1.70h-1.70zM73.31 25.57h5.11v1.70h-5.11zM83.54 25.57h1.70v1.70h-1.70zM88.66 25.57h1.70v1.70h-1.70zM92.07 25.57h1.70v1.70h-1.70zM97.18 25.57h3.41v1.70h-3.41zM0.00 27.28h1.70v1.70h-1.70zM5.11 27.28h3.41v1.70h-3.41zM10.23 27.28h3.41v1.70h-3.41zM17.05 27.28h1.70v1.70h-1.70zM22.16 27.28h1.70v1.70h-1.70zM25.57 27.28h1.70v1.70h-1.70zM34.10 27.28h1.70v1.70h-1.70zM37.51 27.28h1.70v1.70h-1.70zM44.33 27.28h3.41v1.70h-3.41zM51.15 27.28h3.41v1.70h-3.41zM56.26 27.28h1.70v1.70h-1.70zM61.38 27.28h5.11v1.70h-5.11zM69.90 27.28h1.70v1.70h-1.70zM73.31 27.28h1.70v1.70h-1.70zM80.13 27.28h1.70v1.70h-1.70zM86.95 27.28h3.41v1.70h-3.41zM97.18 27.28h1.70v1.70h-1.70zM100.59 27.28h1.70v1.70h-1.70zM0.00 28.98h1.70v1.70h-1.70zM3.41 28.98h3.41v1.70h-3.41zM8.52 28.98h1.70v1.70h-1.70zM20.46 28.98h3.41v1.70h-3.41zM28.98 28.98h3.41v1.70h-3.41zM39.21 28.98h3.41v1.70h-3.41zM46.03 28.98h1.70v1.70h-1.70zM51.15 28.98h1.70v1.70h-1.70zM54.56 28.98h5.11v1.70h-5.11zM64.79 28.98h3.41v1.70h-3.41zM71.61 28.98h1.70v1.70h-1.70zM75.02 28.98h8.52v1.70h-8.52zM88.66 28.98h5.11v1.70h-5.11zM97.18 28.98h3.41v1.70h-3.41zM102.30 28.98h1.70v1.70h-1.70zM0.00 30.69h5.11v1.70h-5.11zM10.23 30.69h3.41v1.70h-3.41zM17.05 30.69h1.70v1.70h-1.70zM23.87 30.69h1.70v1.70h-1.70zM27.28 30.69h1.70v1.70h-1.70zM30.69 30.69h1.70v1.70h-1.70zM35.80 30.69h1.70v1.70h-1.70zM52.85 30.69h3.41v1.70h-3.41zM59.67 30.69h3.41v1.70h-3.41zM64.79 30.69h3.41v1.70h-3.41zM76.72 30.69h1.70v1.70h-1.70zM80.13 30.69h1.70v1.70h-1.70zM85.25 30.69h3.41v1.70h-3.41zM90.36 30.69h1.70v1.70h-1.70zM102.30 30.69h1.70v1.70h-1.70zM1.70 32.39h1.70v1.70h-1.70zM5.11 32.39h1.70v1.70h-1.70zM17.05 32.39h5.11v1.70h-5.11zM27.28 32.39h3.41v1.70h-3.41zM34.10 32.39h5.11v1.70h-5.11zM40.92 32.39h5.11v1.70h-5.11zM47.74 32.39h3.41v1.70h-3.41zM56.26 32.39h1.70v1.70h-1.70zM59.67 32.39h8.52v1.70h-8.52zM69.90 32.39h5.11v1.70h-5.11zM78.43 32.39h1.70v1.70h-1.70zM85.25 32.39h6.82v1.70h-6.82zM93.77 32.39h1.70v1.70h-1.70zM100.59 32.39h1.70v1.70h-1.70zM0.00 34.10h3.41v1.70h-3.41zM5.11 34.10h1.70v1.70h-1.70zM8.52 34.10h5.11v1.70h-5.11zM15.34 34.10h3.41v1.70h-3.41zM20.46 34.10h1.70v1.70h-1.70zM23.87 34.10h6.82v1.70h-6.82zM32.39 34.10h3.41v1.70h-3.41zM37.51 34.10h6.82v1.70h-6.82zM49.44 34.10h1.70v1.70h-1.70zM54.56 34.10h1.70v1.70h-1.70zM59.67 34.10h1.70v1.70h-1.70zM66.49 34.10h1.70v1.70h-1.70zM69.90 34.10h5.11v1.70h-5.11zM76.72 34.10h1.70v1.70h-1.70zM80.13 34.10h3.41v1.70h-3.41zM85.25 34.10h3.41v1.70h-3.41zM92.07 34.10h1.70v1.70h-1.70zM97.18 34.10h1.70v1.70h-1.70zM100.59 34.10h1.70v1.70h-1.70zM6.82 35.80h3.41v1.70h-3.41zM11.93 35.80h10.23v1.70h-10.23zM23.87 35.80h3.41v1.70h-3.41zM28.98 35.80h1.70v1.70h-1.70zM32.39 35.80h3.41v1.70h-3.41zM44.33 35.80h5.11v1.70h-5.11zM59.67 35.80h1.70v1.70h-1.70zM63.08 35.80h1.70v1.70h-1.70zM66.49 35.80h3.41v1.70h-3.41zM71.61 35.80h1.70v1.70h-1.70zM86.95 35.80h1.70v1.70h-1.70zM92.07 35.80h3.41v1.70h-3.41zM97.18 35.80h5.11v1.70h-5.11zM1.70 37.51h3.41v1.70h-3.41zM6.82 37.51h1.70v1.70h-1.70zM10.23 37.51h8.52v1.70h-8.52zM23.87 37.51h5.11v1.70h-5.11zM32.39 37.51h1.70v1.70h-1.70zM35.80 37.51h5.11v1.70h-5.11zM42.62 37.51h5.11v1.70h-5.11zM49.44 37.51h1.70v1.70h-1.70zM52.85 37.51h3.41v1.70h-3.41zM57.97 37.51h11.93v1.70h-11.93zM71.61 37.51h3.41v1.70h-3.41zM81.84 37.51h1.70v1.70h-1.70zM85.25 37.51h3.41v1.70h-3.41zM97.18 37.51h6.82v1.70h-6.82zM6.82 39.21h1.70v1.70h-1.70zM11.93 39.21h1.70v1.70h-1.70zM17.05 39.21h8.52v1.70h-8.52zM27.28 39.21h1.70v1.70h-1.70zM32.39 39.21h1.70v1.70h-1.70zM39.21 39.21h5.11v1.70h-5.11zM49.44 39.21h1.70v1.70h-1.70zM52.85 39.21h1.70v1.70h-1.70zM57.97 39.21h1.70v1.70h-1.70zM69.90 39.21h10.23v1.70h-10.23zM81.84 39.21h5.11v1.70h-5.11zM88.66 39.21h1.70v1.70h-1.70zM97.18 39.21h1.70v1.70h-1.70zM0.00 40.92h1.70v1.70h-1.70zM5.11 40.92h10.23v1.70h-10.23zM17.05 40.92h1.70v1.70h-1.70zM22.16 40.92h6.82v1.70h-6.82zM30.69 40.92h8.52v1.70h-8.52zM44.33 40.92h3.41v1.70h-3.41zM49.44 40.92h1.70v1.70h-1.70zM57.97 40.92h1.70v1.70h-1.70zM61.38 40.92h3.41v1.70h-3.41zM68.20 40.92h1.70v1.70h-1.70zM73.31 40.92h3.41v1.70h-3.41zM90.36 40.92h8.52v1.70h-8.52zM100.59 40.92h3.41v1.70h-3.41zM0.00 42.62h3.41v1.70h-3.41zM5.11 42.62h1.70v1.70h-1.70zM13.64 42.62h3.41v1.70h-3.41zM18.75 42.62h5.11v1.70h-5.11zM28.98 42.62h5.11v1.70h-5.11zM35.80 42.62h5.11v1.70h-5.11zM42.62 42.62h1.70v1.70h-1.70zM46.03 42.62h1.70v1.70h-1.70zM49.44 42.62h1.70v1.70h-1.70zM52.85 42.62h1.70v1.70h-1.70zM57.97 42.62h5.11v1.70h-5.11zM69.90 42.62h3.41v1.70h-3.41zM78.43 42.62h1.70v1.70h-1.70zM83.54 42.62h1.70v1.70h-1.70zM86.95 42.62h1.70v1.70h-1.70zM90.36 42.62h3.41v1.70h-3.41zM95.48 42.62h8.52v1.70h-8.52zM1.70 44.33h1.70v1.70h-1.70zM5.11 44.33h3.41v1.70h-3.41zM10.23 44.33h1.70v1.70h-1.70zM17.05 44.33h3.41v1.70h-3.41zM23.87 44.33h1.70v1.70h-1.70zM27.28 44.33h6.82v1.70h-6.82zM40.92 44.33h8.52v1.70h-8.52zM51.15 44.33h3.41v1.70h-3.41zM57.97 44.33h1.70v1.70h-1.70zM61.38 44.33h5.11v1.70h-5.11zM68.20 44.33h3.41v1.70h-3.41zM73.31 44.33h1.70v1.70h-1.70zM76.72 44.33h1.70v1.70h-1.70zM85.25 44.33h3.41v1.70h-3.41zM92.07 44.33h3.41v1.70h-3.41zM97.18 44.33h1.70v1.70h-1.70zM1.70 46.03h3.41v1.70h-3.41zM8.52 46.03h1.70v1.70h-1.70zM13.64 46.03h1.70v1.70h-1.70zM20.46 46.03h1.70v1.70h-1.70zM23.87 46.03h8.52v1.70h-8.52zM39.21 46.03h1.70v1.70h-1.70zM42.62 46.03h3.41v1.70h-3.41zM49.44 46.03h5.11v1.70h-5.11zM59.67 46.03h1.70v1.70h-1.70zM63.08 46.03h3.41v1.70h-3.41zM73.31 46.03h1.70v1.70h-1.70zM80.13 46.03h3.41v1.70h-3.41zM85.25 46.03h1.70v1.70h-1.70zM88.66 46.03h1.70v1.70h-1.70zM92.07 46.03h3.41v1.70h-3.41zM97.18 46.03h1.70v1.70h-1.70zM100.59 46.03h1.70v1.70h-1.70zM1.70 47.74h1.70v1.70h-1.70zM5.11 47.74h10.23v1.70h-10.23zM20.46 47.74h1.70v1.70h-1.70zM25.57 47.74h3.41v1.70h-3.41zM30.69 47.74h3.41v1.70h-3.41zM40.92 47.74h1.70v1.70h-1.70zM47.74 47.74h10.23v1.70h-10.23zM59.67 47.74h3.41v1.70h-3.41zM64.79 47.74h3.41v1.70h-3.41zM69.90 47.74h5.11v1.70h-5.11zM76.72 47.74h1.70v1.70h-1.70zM80.13 47.74h3.41v1.70h-3.41zM85.25 47.74h1.70v1.70h-1.70zM88.66 47.74h11.93v1.70h-11.93zM0.00 49.44h5.11v1.70h-5.11zM6.82 49.44h1.70v1.70h-1.70zM13.64 49.44h1.70v1.70h-1.70zM27.28 49.44h5.11v1.70h-5.11zM34.10 49.44h1.70v1.70h-1.70zM37.51 49.44h1.70v1.70h-1.70zM44.33 49.44h5.11v1.70h-5.11zM54.56 49.44h1.70v1.70h-1.70zM64.79 49.44h1.70v1.70h-1.70zM69.90 49.44h1.70v1.70h-1.70zM73.31 49.44h1.70v1.70h-1.70zM80.13 49.44h1.70v1.70h-1.70zM83.54 49.44h1.70v1.70h-1.70zM86.95 49.44h3.41v1.70h-3.41zM95.48 49.44h8.52v1.70h-8.52zM1.70 51.15h1.70v1.70h-1.70zM6.82 51.15h1.70v1.70h-1.70zM10.23 51.15h1.70v1.70h-1.70zM13.64 51.15h1.70v1.70h-1.70zM17.05 51.15h1.70v1.70h-1.70zM22.16 51.15h3.41v1.70h-3.41zM28.98 51.15h1.70v1.70h-1.70zM32.39 51.15h1.70v1.70h-1.70zM44.33 51.15h5.11v1.70h-5.11zM51.15 51.15h1.70v1.70h-1.70zM54.56 51.15h1.70v1.70h-1.70zM63.08 51.15h1.70v1.70h-1.70zM66.49 51.15h1.70v1.70h-1.70zM69.90 51.15h1.70v1.70h-1.70zM73.31 51.15h1.70v1.70h-1.70zM78.43 51.15h11.93v1.70h-11.93zM92.07 51.15h1.70v1.70h-1.70zM95.48 51.15h1.70v1.70h-1.70zM98.89 51.15h1.70v1.70h-1.70zM3.41 52.85h5.11v1.70h-5.11zM13.64 52.85h1.70v1.70h-1.70zM17.05 52.85h11.93v1.70h-11.93zM30.69 52.85h1.70v1.70h-1.70zM34.10 52.85h3.41v1.70h-3.41zM39.21 52.85h1.70v1.70h-1.70zM42.62 52.85h1.70v1.70h-1.70zM46.03 52.85h3.41v1.70h-3.41zM54.56 52.85h5.11v1.70h-5.11zM64.79 52.85h6.82v1.70h-6.82zM75.02 52.85h1.70v1.70h-1.70zM80.13 52.85h1.70v1.70h-1.70zM86.95 52.85h3.41v1.70h-3.41zM95.48 52.85h3.41v1.70h-3.41zM100.59 52.85h1.70v1.70h-1.70zM0.00 54.56h1.70v1.70h-1.70zM5.11 54.56h10.23v1.70h-10.23zM18.75 54.56h1.70v1.70h-1.70zM22.16 54.56h1.70v1.70h-1.70zM25.57 54.56h1.70v1.70h-1.70zM30.69 54.56h1.70v1.70h-1.70zM35.80 54.56h8.52v1.70h-8.52zM47.74 54.56h10.23v1.70h-10.23zM59.67 54.56h1.70v1.70h-1.70zM64.79 54.56h3.41v1.70h-3.41zM73.31 54.56h1.70v1.70h-1.70zM76.72 54.56h1.70v1.70h-1.70zM88.66 54.56h11.93v1.70h-11.93zM6.82 56.26h1.70v1.70h-1.70zM15.34 56.26h1.70v1.70h-1.70zM18.75 56.26h1.70v1.70h-1.70zM22.16 56.26h6.82v1.70h-6.82zM30.69 56.26h1.70v1.70h-1.70zM39.21 56.26h6.82v1.70h-6.82zM49.44 56.26h3.41v1.70h-3.41zM54.56 56.26h3.41v1.70h-3.41zM66.49 56.26h3.41v1.70h-3.41zM71.61 56.26h1.70v1.70h-1.70zM75.02 56.26h5.11v1.70h-5.11zM81.84 56.26h3.41v1.70h-3.41zM88.66 56.26h3.41v1.70h-3.41zM93.77 56.26h1.70v1.70h-1.70zM102.30 56.26h1.70v1.70h-1.70zM0.00 57.97h1.70v1.70h-1.70zM3.41 57.97h10.23v1.70h-10.23zM18.75 57.97h1.70v1.70h-1.70zM23.87 57.97h1.70v1.70h-1.70zM30.69 57.97h3.41v1.70h-3.41zM35.80 57.97h1.70v1.70h-1.70zM39.21 57.97h1.70v1.70h-1.70zM44.33 57.97h1.70v1.70h-1.70zM49.44 57.97h3.41v1.70h-3.41zM54.56 57.97h1.70v1.70h-1.70zM59.67 57.97h1.70v1.70h-1.70zM69.90 57.97h1.70v1.70h-1.70zM73.31 57.97h1.70v1.70h-1.70zM78.43 57.97h3.41v1.70h-3.41zM88.66 57.97h1.70v1.70h-1.70zM92.07 57.97h1.70v1.70h-1.70zM95.48 57.97h1.70v1.70h-1.70zM100.59 57.97h1.70v1.70h-1.70zM1.70 59.67h8.52v1.70h-8.52zM11.93 59.67h3.41v1.70h-3.41zM22.16 59.67h1.70v1.70h-1.70zM30.69 59.67h1.70v1.70h-1.70zM34.10 59.67h10.23v1.70h-10.23zM47.74 59.67h1.70v1.70h-1.70zM51.15 59.67h1.70v1.70h-1.70zM56.26 59.67h6.82v1.70h-6.82zM68.20 59.67h3.41v1.70h-3.41zM73.31 59.67h1.70v1.70h-1.70zM76.72 59.67h5.11v1.70h-5.11zM85.25 59.67h1.70v1.70h-1.70zM88.66 59.67h1.70v1.70h-1.70zM93.77 59.67h3.41v1.70h-3.41zM100.59 59.67h3.41v1.70h-3.41zM1.70 61.38h1.70v1.70h-1.70zM5.11 61.38h1.70v1.70h-1.70zM10.23 61.38h1.70v1.70h-1.70zM13.64 61.38h3.41v1.70h-3.41zM18.75 61.38h3.41v1.70h-3.41zM23.87 61.38h1.70v1.70h-1.70zM28.98 61.38h1.70v1.70h-1.70zM32.39 61.38h5.11v1.70h-5.11zM40.92 61.38h1.70v1.70h-1.70zM47.74 61.38h5.11v1.70h-5.11zM56.26 61.38h1.70v1.70h-1.70zM59.67 61.38h3.41v1.70h-3.41zM69.90 61.38h1.70v1.70h-1.70zM73.31 61.38h1.70v1.70h-1.70zM78.43 61.38h1.70v1.70h-1.70zM86.95 61.38h3.41v1.70h-3.41zM95.48 61.38h6.82v1.70h-6.82zM5.11 63.08h5.11v1.70h-5.11zM15.34 63.08h1.70v1.70h-1.70zM18.75 63.08h1.70v1.70h-1.70zM23.87 63.08h6.82v1.70h-6.82zM34.10 63.08h1.70v1.70h-1.70zM37.51 63.08h5.11v1.70h-5.11zM44.33 63.08h1.70v1.70h-1.70zM47.74 63.08h1.70v1.70h-1.70zM52.85 63.08h1.70v1.70h-1.70zM57.97 63.08h5.11v1.70h-5.11zM64.79 63.08h5.11v1.70h-5.11zM76.72 63.08h3.41v1.70h-3.41zM86.95 63.08h6.82v1.70h-6.82zM95.48 63.08h1.70v1.70h-1.70zM98.89 63.08h1.70v1.70h-1.70zM6.82 64.79h6.82v1.70h-6.82zM18.75 64.79h1.70v1.70h-1.70zM22.16 64.79h3.41v1.70h-3.41zM30.69 64.79h1.70v1.70h-1.70zM37.51 64.79h1.70v1.70h-1.70zM40.92 64.79h1.70v1.70h-1.70zM44.33 64.79h1.70v1.70h-1.70zM49.44 64.79h1.70v1.70h-1.70zM52.85 64.79h3.41v1.70h-3.41zM57.97 64.79h1.70v1.70h-1.70zM64.79 64.79h1.70v1.70h-1.70zM68.20 64.79h3.41v1.70h-3.41zM73.31 64.79h3.41v1.70h-3.41zM78.43 64.79h1.70v1.70h-1.70zM83.54 64.79h3.41v1.70h-3.41zM88.66 64.79h5.11v1.70h-5.11zM97.18 64.79h6.82v1.70h-6.82zM1.70 66.49h1.70v1.70h-1.70zM6.82 66.49h1.70v1.70h-1.70zM15.34 66.49h3.41v1.70h-3.41zM20.46 66.49h1.70v1.70h-1.70zM23.87 66.49h1.70v1.70h-1.70zM30.69 66.49h3.41v1.70h-3.41zM40.92 66.49h1.70v1.70h-1.70zM44.33 66.49h1.70v1.70h-1.70zM47.74 66.49h1.70v1.70h-1.70zM51.15 66.49h1.70v1.70h-1.70zM57.97 66.49h5.11v1.70h-5.11zM64.79 66.49h1.70v1.70h-1.70zM68.20 66.49h1.70v1.70h-1.70zM71.61 66.49h1.70v1.70h-1.70zM80.13 66.49h6.82v1.70h-6.82zM90.36 66.49h6.82v1.70h-6.82zM100.59 66.49h1.70v1.70h-1.70zM6.82 68.20h5.11v1.70h-5.11zM13.64 68.20h8.52v1.70h-8.52zM27.28 68.20h1.70v1.70h-1.70zM30.69 68.20h3.41v1.70h-3.41zM37.51 68.20h5.11v1.70h-5.11zM47.74 68.20h1.70v1.70h-1.70zM51.15 68.20h1.70v1.70h-1.70zM59.67 68.20h6.82v1.70h-6.82zM68.20 68.20h1.70v1.70h-1.70zM71.61 68.20h1.70v1.70h-1.70zM75.02 68.20h1.70v1.70h-1.70zM83.54 68.20h3.41v1.70h-3.41zM88.66 68.20h1.70v1.70h-1.70zM93.77 68.20h1.70v1.70h-1.70zM97.18 68.20h3.41v1.70h-3.41zM102.30 68.20h1.70v1.70h-1.70zM0.00 69.90h1.70v1.70h-1.70zM3.41 69.90h1.70v1.70h-1.70zM8.52 69.90h1.70v1.70h-1.70zM17.05 69.90h3.41v1.70h-3.41zM25.57 69.90h15.34v1.70h-15.34zM42.62 69.90h6.82v1.70h-6.82zM51.15 69.90h8.52v1.70h-8.52zM66.49 69.90h20.46v1.70h-20.46zM90.36 69.90h5.11v1.70h-5.11zM97.18 69.90h1.70v1.70h-1.70zM102.30 69.90h1.70v1.70h-1.70zM0.00 71.61h1.70v1.70h-1.70zM6.82 71.61h5.11v1.70h-5.11zM13.64 71.61h3.41v1.70h-3.41zM20.46 71.61h1.70v1.70h-1.70zM23.87 71.61h1.70v1.70h-1.70zM27.28 71.61h3.41v1.70h-3.41zM32.39 71.61h3.41v1.70h-3.41zM46.03 71.61h1.70v1.70h-1.70zM49.44 71.61h3.41v1.70h-3.41zM57.97 71.61h3.41v1.70h-3.41zM63.08 71.61h1.70v1.70h-1.70zM69.90 71.61h1.70v1.70h-1.70zM73.31 71.61h3.41v1.70h-3.41zM85.25 71.61h1.70v1.70h-1.70zM92.07 71.61h1.70v1.70h-1.70zM97.18 71.61h1.70v1.70h-1.70zM100.59 71.61h1.70v1.70h-1.70zM1.70 73.31h1.70v1.70h-1.70zM6.82 73.31h3.41v1.70h-3.41zM11.93 73.31h1.70v1.70h-1.70zM20.46 73.31h3.41v1.70h-3.41zM28.98 73.31h6.82v1.70h-6.82zM37.51 73.31h1.70v1.70h-1.70zM40.92 73.31h11.93v1.70h-11.93zM54.56 73.31h3.41v1.70h-3.41zM59.67 73.31h1.70v1.70h-1.70zM66.49 73.31h1.70v1.70h-1.70zM69.90 73.31h5.11v1.70h-5.11zM78.43 73.31h5.11v1.70h-5.11zM85.25 73.31h3.41v1.70h-3.41zM90.36 73.31h1.70v1.70h-1.70zM93.77 73.31h1.70v1.70h-1.70zM97.18 73.31h1.70v1.70h-1.70zM102.30 73.31h1.70v1.70h-1.70zM0.00 75.02h1.70v1.70h-1.70zM3.41 75.02h8.52v1.70h-8.52zM22.16 75.02h1.70v1.70h-1.70zM30.69 75.02h1.70v1.70h-1.70zM34.10 75.02h8.52v1.70h-8.52zM46.03 75.02h6.82v1.70h-6.82zM61.38 75.02h13.64v1.70h-13.64zM80.13 75.02h1.70v1.70h-1.70zM83.54 75.02h1.70v1.70h-1.70zM86.95 75.02h5.11v1.70h-5.11zM93.77 75.02h3.41v1.70h-3.41zM98.89 75.02h3.41v1.70h-3.41zM3.41 76.72h3.41v1.70h-3.41zM11.93 76.72h1.70v1.70h-1.70zM15.34 76.72h1.70v1.70h-1.70zM22.16 76.72h1.70v1.70h-1.70zM27.28 76.72h1.70v1.70h-1.70zM30.69 76.72h3.41v1.70h-3.41zM35.80 76.72h1.70v1.70h-1.70zM40.92 76.72h1.70v1.70h-1.70zM46.03 76.72h1.70v1.70h-1.70zM51.15 76.72h11.93v1.70h-11.93zM64.79 76.72h1.70v1.70h-1.70zM68.20 76.72h3.41v1.70h-3.41zM76.72 76.72h1.70v1.70h-1.70zM86.95 76.72h1.70v1.70h-1.70zM90.36 76.72h1.70v1.70h-1.70zM98.89 76.72h1.70v1.70h-1.70zM102.30 76.72h1.70v1.70h-1.70zM0.00 78.43h3.41v1.70h-3.41zM6.82 78.43h1.70v1.70h-1.70zM10.23 78.43h3.41v1.70h-3.41zM15.34 78.43h1.70v1.70h-1.70zM18.75 78.43h3.41v1.70h-3.41zM27.28 78.43h1.70v1.70h-1.70zM30.69 78.43h3.41v1.70h-3.41zM35.80 78.43h6.82v1.70h-6.82zM44.33 78.43h1.70v1.70h-1.70zM49.44 78.43h3.41v1.70h-3.41zM54.56 78.43h3.41v1.70h-3.41zM59.67 78.43h3.41v1.70h-3.41zM64.79 78.43h3.41v1.70h-3.41zM69.90 78.43h1.70v1.70h-1.70zM73.31 78.43h1.70v1.70h-1.70zM76.72 78.43h1.70v1.70h-1.70zM80.13 78.43h1.70v1.70h-1.70zM83.54 78.43h3.41v1.70h-3.41zM88.66 78.43h5.11v1.70h-5.11zM95.48 78.43h1.70v1.70h-1.70zM100.59 78.43h3.41v1.70h-3.41zM0.00 80.13h3.41v1.70h-3.41zM5.11 80.13h1.70v1.70h-1.70zM13.64 80.13h6.82v1.70h-6.82zM22.16 80.13h3.41v1.70h-3.41zM27.28 80.13h1.70v1.70h-1.70zM32.39 80.13h1.70v1.70h-1.70zM35.80 80.13h1.70v1.70h-1.70zM39.21 80.13h1.70v1.70h-1.70zM42.62 80.13h1.70v1.70h-1.70zM47.74 80.13h3.41v1.70h-3.41zM54.56 80.13h3.41v1.70h-3.41zM61.38 80.13h1.70v1.70h-1.70zM64.79 80.13h6.82v1.70h-6.82zM83.54 80.13h1.70v1.70h-1.70zM90.36 80.13h3.41v1.70h-3.41zM97.18 80.13h5.11v1.70h-5.11zM6.82 81.84h1.70v1.70h-1.70zM10.23 81.84h1.70v1.70h-1.70zM13.64 81.84h1.70v1.70h-1.70zM22.16 81.84h8.52v1.70h-8.52zM37.51 81.84h1.70v1.70h-1.70zM40.92 81.84h1.70v1.70h-1.70zM46.03 81.84h3.41v1.70h-3.41zM51.15 81.84h1.70v1.70h-1.70zM56.26 81.84h1.70v1.70h-1.70zM63.08 81.84h1.70v1.70h-1.70zM69.90 81.84h6.82v1.70h-6.82zM78.43 81.84h1.70v1.70h-1.70zM83.54 81.84h1.70v1.70h-1.70zM88.66 81.84h1.70v1.70h-1.70zM97.18 81.84h3.41v1.70h-3.41zM102.30 81.84h1.70v1.70h-1.70zM3.41 83.54h1.70v1.70h-1.70zM6.82 83.54h3.41v1.70h-3.41zM15.34 83.54h6.82v1.70h-6.82zM23.87 83.54h5.11v1.70h-5.11zM32.39 83.54h1.70v1.70h-1.70zM35.80 83.54h1.70v1.70h-1.70zM39.21 83.54h6.82v1.70h-6.82zM54.56 83.54h5.11v1.70h-5.11zM61.38 83.54h5.11v1.70h-5.11zM69.90 83.54h1.70v1.70h-1.70zM76.72 83.54h5.11v1.70h-5.11zM83.54 83.54h1.70v1.70h-1.70zM86.95 83.54h3.41v1.70h-3.41zM92.07 83.54h1.70v1.70h-1.70zM95.48 83.54h1.70v1.70h-1.70zM98.89 83.54h1.70v1.70h-1.70zM102.30 83.54h1.70v1.70h-1.70zM3.41 85.25h10.23v1.70h-10.23zM18.75 85.25h1.70v1.70h-1.70zM25.57 85.25h1.70v1.70h-1.70zM28.98 85.25h5.11v1.70h-5.11zM37.51 85.25h1.70v1.70h-1.70zM46.03 85.25h1.70v1.70h-1.70zM49.44 85.25h5.11v1.70h-5.11zM56.26 85.25h1.70v1.70h-1.70zM59.67 85.25h1.70v1.70h-1.70zM63.08 85.25h5.11v1.70h-5.11zM73.31 85.25h6.82v1.70h-6.82zM83.54 85.25h6.82v1.70h-6.82zM93.77 85.25h8.52v1.70h-8.52zM3.41 86.95h1.70v1.70h-1.70zM6.82 86.95h3.41v1.70h-3.41zM11.93 86.95h3.41v1.70h-3.41zM18.75 86.95h1.70v1.70h-1.70zM22.16 86.95h5.11v1.70h-5.11zM28.98 86.95h3.41v1.70h-3.41zM34.10 86.95h3.41v1.70h-3.41zM40.92 86.95h1.70v1.70h-1.70zM44.33 86.95h1.70v1.70h-1.70zM51.15 86.95h1.70v1.70h-1.70zM54.56 86.95h3.41v1.70h-3.41zM59.67 86.95h3.41v1.70h-3.41zM66.49 86.95h6.82v1.70h-6.82zM76.72 86.95h3.41v1.70h-3.41zM81.84 86.95h6.82v1.70h-6.82zM90.36 86.95h1.70v1.70h-1.70zM93.77 86.95h5.11v1.70h-5.11zM100.59 86.95h3.41v1.70h-3.41zM0.00 88.66h3.41v1.70h-3.41zM10.23 88.66h1.70v1.70h-1.70zM17.05 88.66h1.70v1.70h-1.70zM20.46 88.66h1.70v1.70h-1.70zM25.57 88.66h6.82v1.70h-6.82zM35.80 88.66h1.70v1.70h-1.70zM46.03 88.66h10.23v1.70h-10.23zM57.97 88.66h1.70v1.70h-1.70zM63.08 88.66h1.70v1.70h-1.70zM66.49 88.66h1.70v1.70h-1.70zM71.61 88.66h1.70v1.70h-1.70zM76.72 88.66h1.70v1.70h-1.70zM85.25 88.66h1.70v1.70h-1.70zM88.66 88.66h8.52v1.70h-8.52zM102.30 88.66h1.70v1.70h-1.70zM17.05 90.36h10.23v1.70h-10.23zM28.98 90.36h1.70v1.70h-1.70zM32.39 90.36h3.41v1.70h-3.41zM40.92 90.36h3.41v1.70h-3.41zM47.74 90.36h1.70v1.70h-1.70zM54.56 90.36h1.70v1.70h-1.70zM63.08 90.36h1.70v1.70h-1.70zM66.49 90.36h8.52v1.70h-8.52zM81.84 90.36h1.70v1.70h-1.70zM88.66 90.36h1.70v1.70h-1.70zM95.48 90.36h1.70v1.70h-1.70zM98.89 90.36h1.70v1.70h-1.70zM102.30 90.36h1.70v1.70h-1.70zM0.00 92.07h11.93v1.70h-11.93zM13.64 92.07h1.70v1.70h-1.70zM17.05 92.07h1.70v1.70h-1.70zM23.87 92.07h1.70v1.70h-1.70zM28.98 92.07h1.70v1.70h-1.70zM35.80 92.07h1.70v1.70h-1.70zM40.92 92.07h1.70v1.70h-1.70zM44.33 92.07h1.70v1.70h-1.70zM47.74 92.07h1.70v1.70h-1.70zM51.15 92.07h1.70v1.70h-1.70zM54.56 92.07h3.41v1.70h-3.41zM59.67 92.07h1.70v1.70h-1.70zM66.49 92.07h13.64v1.70h-13.64zM85.25 92.07h5.11v1.70h-5.11zM92.07 92.07h1.70v1.70h-1.70zM95.48 92.07h1.70v1.70h-1.70zM98.89 92.07h3.41v1.70h-3.41zM0.00 93.77h1.70v1.70h-1.70zM10.23 93.77h1.70v1.70h-1.70zM17.05 93.77h3.41v1.70h-3.41zM22.16 93.77h3.41v1.70h-3.41zM27.28 93.77h5.11v1.70h-5.11zM37.51 93.77h1.70v1.70h-1.70zM42.62 93.77h3.41v1.70h-3.41zM47.74 93.77h1.70v1.70h-1.70zM54.56 93.77h3.41v1.70h-3.41zM59.67 93.77h6.82v1.70h-6.82zM71.61 93.77h6.82v1.70h-6.82zM81.84 93.77h8.52v1.70h-8.52zM95.48 93.77h1.70v1.70h-1.70zM100.59 93.77h3.41v1.70h-3.41zM0.00 95.48h1.70v1.70h-1.70zM3.41 95.48h5.11v1.70h-5.11zM10.23 95.48h1.70v1.70h-1.70zM13.64 95.48h5.11v1.70h-5.11zM20.46 95.48h5.11v1.70h-5.11zM27.28 95.48h1.70v1.70h-1.70zM30.69 95.48h1.70v1.70h-1.70zM34.10 95.48h11.93v1.70h-11.93zM47.74 95.48h8.52v1.70h-8.52zM57.97 95.48h3.41v1.70h-3.41zM71.61 95.48h1.70v1.70h-1.70zM76.72 95.48h1.70v1.70h-1.70zM80.13 95.48h3.41v1.70h-3.41zM88.66 95.48h8.52v1.70h-8.52zM0.00 97.18h1.70v1.70h-1.70zM3.41 97.18h5.11v1.70h-5.11zM10.23 97.18h1.70v1.70h-1.70zM13.64 97.18h1.70v1.70h-1.70zM17.05 97.18h1.70v1.70h-1.70zM23.87 97.18h3.41v1.70h-3.41zM28.98 97.18h1.70v1.70h-1.70zM35.80 97.18h1.70v1.70h-1.70zM40.92 97.18h10.23v1.70h-10.23zM57.97 97.18h5.11v1.70h-5.11zM71.61 97.18h3.41v1.70h-3.41zM76.72 97.18h6.82v1.70h-6.82zM85.25 97.18h5.11v1.70h-5.11zM93.77 97.18h1.70v1.70h-1.70zM97.18 97.18h3.41v1.70h-3.41zM0.00 98.89h1.70v1.70h-1.70zM3.41 98.89h5.11v1.70h-5.11zM10.23 98.89h1.70v1.70h-1.70zM15.34 98.89h1.70v1.70h-1.70zM18.75 98.89h5.11v1.70h-5.11zM25.57 98.89h1.70v1.70h-1.70zM28.98 98.89h1.70v1.70h-1.70zM32.39 98.89h1.70v1.70h-1.70zM35.80 98.89h3.41v1.70h-3.41zM40.92 98.89h3.41v1.70h-3.41zM54.56 98.89h3.41v1.70h-3.41zM59.67 98.89h1.70v1.70h-1.70zM64.79 98.89h3.41v1.70h-3.41zM71.61 98.89h3.41v1.70h-3.41zM78.43 98.89h1.70v1.70h-1.70zM85.25 98.89h5.11v1.70h-5.11zM92.07 98.89h1.70v1.70h-1.70zM97.18 98.89h3.41v1.70h-3.41zM0.00 100.59h1.70v1.70h-1.70zM10.23 100.59h1.70v1.70h-1.70zM15.34 100.59h5.11v1.70h-5.11zM28.98 100.59h5.11v1.70h-5.11zM37.51 100.59h1.70v1.70h-1.70zM44.33 100.59h3.41v1.70h-3.41zM49.44 100.59h1.70v1.70h-1.70zM54.56 100.59h8.52v1.70h-8.52zM66.49 100.59h3.41v1.70h-3.41zM75.02 100.59h1.70v1.70h-1.70zM80.13 100.59h5.11v1.70h-5.11zM90.36 100.59h1.70v1.70h-1.70zM95.48 100.59h3.41v1.70h-3.41zM0.00 102.30h11.93v1.70h-11.93zM25.57 102.30h6.82v1.70h-6.82zM35.80 102.30h1.70v1.70h-1.70zM39.21 102.30h1.70v1.70h-1.70zM54.56 102.30h6.82v1.70h-6.82zM64.79 102.30h1.70v1.70h-1.70zM68.20 102.30h5.11v1.70h-5.11zM75.02 102.30h1.70v1.70h-1.70zM78.43 102.30h5.11v1.70h-5.11zM85.25 102.30h1.70v1.70h-1.70zM92.07 102.30h1.70v1.70h-1.70zM98.89 102.30h5.11v1.70h-5.11z"/></svg>
<div class="abs" id="chat"><svg width="28" height="30" viewBox="0 0 28 30"><path d="M12.6 8.2h10.4a3 3 0 0 1 3 3v6.5a3 3 0 0 1-3 3h-4.6l-3.6 3.3-.6-3.3h-1.6a3 3 0 0 1-3-3v-6.5a3 3 0 0 1 3-3z" fill="#fff"/></svg></div>
<div id="txt" style="position:absolute;left:0;top:0;width:1187px;height:933px;will-change:transform;">
<span class="t" style="left:149.77px;top:7.60px;font-size:10px;color:#1b2a5c;font-weight:bold;letter-spacing:-0.011px;">Market</span>
<span class="t" style="left:149.96px;top:18.60px;font-size:10px;color:#1b2a5c;font-weight:bold;letter-spacing:-0.200px;-webkit-text-stroke:0.25px #1b2a5c;transform:scaleX(0.8995);transform-origin:0 0;">Research</span>
<span class="t" style="left:149.96px;top:28.72px;font-size:10px;color:#1b2a5c;font-weight:bold;letter-spacing:-0.200px;-webkit-text-stroke:0.25px #1b2a5c;transform:scaleX(0.9021);transform-origin:0 0;">Reports</span>
<a class="t" style="left:382.02px;top:16.90px;font-size:12.5px;color:#1c3b56;font-weight:bold;letter-spacing:0.150px;transform:scaleX(1.0411);transform-origin:0 0;">HOME</a>
<a class="t" style="left:448.75px;top:16.90px;font-size:12.5px;color:#1c3b56;font-weight:bold;letter-spacing:0.068px;">FAQS</a>
<a class="t" style="left:509.57px;top:16.90px;font-size:12.5px;color:#1c3b56;font-weight:bold;letter-spacing:0.097px;">CONTACT US</a>
<a class="t" style="left:618.25px;top:16.90px;font-size:12.5px;color:#1c3b56;font-weight:bold;letter-spacing:-0.176px;">BECOME PUBLISHER</a>
<a class="t" style="left:773.05px;top:16.90px;font-size:12.5px;color:#1db8ad;font-weight:bold;letter-spacing:-0.180px;">RESEARCH SUBSCRIPTION</a>
<span class="t" style="left:1003.29px;top:15.82px;font-size:15px;color:#be1e2d;letter-spacing:-0.287px;-webkit-text-stroke:0.35px #be1e2d;">0 items $0.00</span>
<span class="t" style="left:182.78px;top:2.60px;font-size:6px;color:#1b2a5c;">®</span>
<span class="t" style="left:38.70px;top:109.10px;font-size:15.2px;color:#7a7a7a;letter-spacing:-0.449px;">Search Keyword</span>
<span class="t" style="left:901.52px;top:110.00px;font-size:15px;color:#ffffff;font-weight:bold;letter-spacing:-0.365px;">SEARCH</span>
<span class="t" style="left:8.76px;top:189.00px;font-size:15px;color:#747677;letter-spacing:-0.334px;">You are here:</span>
<a class="t" style="left:102.83px;top:189.00px;font-size:14.6px;color:#fb9e12;letter-spacing:0.073px;-webkit-text-stroke:0.18px #fb9e12;">Home</a>
<span class="t" style="left:150.26px;top:189.60px;font-size:17px;color:#8a8a8a;transform:scaleX(0.6200);transform-origin:0 0;">&gt;</span>
<a class="t" style="left:164.06px;top:189.00px;font-size:14.6px;color:#fb9e12;letter-spacing:-0.086px;-webkit-text-stroke:0.18px #fb9e12;">Catalog</a>
<span class="t" style="left:222.06px;top:189.60px;font-size:17px;color:#8a8a8a;transform:scaleX(0.6200);transform-origin:0 0;">&gt;</span>
<a class="t" style="left:235.71px;top:189.00px;font-size:14.6px;color:#fb9e12;letter-spacing:-0.204px;-webkit-text-stroke:0.18px #fb9e12;">Pharma &amp; Healthcare</a>
<span class="t" style="left:379.66px;top:189.60px;font-size:17px;color:#8a8a8a;transform:scaleX(0.6200);transform-origin:0 0;">&gt;</span>
<a class="t" style="left:394.41px;top:189.00px;font-size:14.6px;color:#fb9e12;letter-spacing:-0.154px;-webkit-text-stroke:0.18px #fb9e12;">Medical Devices</a>
<span class="t" style="left:506.86px;top:189.60px;font-size:17px;color:#8a8a8a;transform:scaleX(0.6200);transform-origin:0 0;">&gt;</span>
<a class="t" style="left:520.71px;top:189.00px;font-size:14.6px;color:#fb9e12;letter-spacing:-0.144px;-webkit-text-stroke:0.18px #fb9e12;">Healthcare</a>
<span class="t" style="left:598.46px;top:189.60px;font-size:17px;color:#8a8a8a;transform:scaleX(0.6200);transform-origin:0 0;">&gt;</span>
<a class="t" style="left:612.96px;top:189.00px;font-size:14.6px;color:#fb9e12;letter-spacing:-0.123px;-webkit-text-stroke:0.18px #fb9e12;">Country Overview (Pharma &amp; Healthcare)</a>
<span class="t" style="left:8.16px;top:260.22px;font-size:33.4px;color:#1fbdb2;letter-spacing:0.401px;-webkit-text-stroke:0.55px #fff;transform:scaleX(1.0596);transform-origin:0 0;">Global</span>
<span class="t" style="left:123.02px;top:260.22px;font-size:33.4px;color:#1fbdb2;letter-spacing:0.401px;-webkit-text-stroke:0.55px #fff;transform:scaleX(1.0885);transform-origin:0 0;">and</span>
<span class="t" style="left:192.86px;top:260.22px;font-size:33.4px;color:#1fbdb2;letter-spacing:0.401px;-webkit-text-stroke:0.55px #fff;transform:scaleX(1.0562);transform-origin:0 0;">Chinese</span>
<span class="t" style="left:332.23px;top:260.22px;font-size:33.4px;color:#1fbdb2;letter-spacing:0.401px;-webkit-text-stroke:0.55px #fff;transform:scaleX(1.0680);transform-origin:0 0;">Cervical</span>
<span class="t" style="left:471.96px;top:260.22px;font-size:33.4px;color:#1fbdb2;letter-spacing:0.401px;-webkit-text-stroke:0.55px #fff;transform:scaleX(1.0510);transform-origin:0 0;">Traction</span>
<span class="t" style="left:610.53px;top:260.22px;font-size:33.4px;color:#1fbdb2;letter-spacing:0.401px;-webkit-text-stroke:0.55px #fff;transform:scaleX(1.0466);transform-origin:0 0;">Devices</span>
<span class="t" style="left:746.32px;top:260.22px;font-size:33.4px;color:#1fbdb2;letter-spacing:0.401px;-webkit-text-stroke:0.55px #fff;transform:scaleX(1.0826);transform-origin:0 0;">Industry,</span>
<span class="t" style="left:893.52px;top:260.22px;font-size:33.4px;color:#1fbdb2;letter-spacing:0.304px;-webkit-text-stroke:0.55px #fff;">2018</span>
<span class="t" style="left:978.07px;top:260.22px;font-size:33.4px;color:#1fbdb2;letter-spacing:0.401px;-webkit-text-stroke:0.55px #fff;transform:scaleX(1.0638);transform-origin:0 0;">Market</span>
<span class="t" style="left:7.66px;top:302.40px;font-size:33.4px;color:#1fbdb2;letter-spacing:0.401px;-webkit-text-stroke:0.55px #fff;transform:scaleX(1.0382);transform-origin:0 0;">Research</span>
<span class="t" style="left:166.75px;top:302.40px;font-size:33.4px;color:#1fbdb2;letter-spacing:0.401px;-webkit-text-stroke:0.55px #fff;transform:scaleX(1.0715);transform-origin:0 0;">Report</span>
<span class="t" style="left:47.85px;top:496.82px;font-size:16.6px;color:#333333;letter-spacing:0.199px;-webkit-text-stroke:0.3px #fff;transform:scaleX(1.0917);transform-origin:0 0;">Global and Chinese Cervical</span>
<span class="t" style="left:48.46px;top:518.00px;font-size:16.6px;color:#333333;letter-spacing:0.199px;-webkit-text-stroke:0.3px #fff;transform:scaleX(1.0740);transform-origin:0 0;">Traction Devices Industry, 2018</span>
<span class="t" style="left:47.49px;top:539.00px;font-size:16.6px;color:#333333;letter-spacing:0.199px;-webkit-text-stroke:0.3px #fff;transform:scaleX(1.0834);transform-origin:0 0;">Market Research Report</span>
<span class="t" style="left:81.52px;top:796.22px;font-size:15px;color:#ffffff;letter-spacing:-0.446px;font-family:'DejaVu Sans','Liberation Sans',sans-serif;">www.marketresearchreports.com</span>
<a class="t" style="left:38.79px;top:845.00px;font-size:15px;color:#fb9e12;letter-spacing:-0.215px;-webkit-text-stroke:0.18px #fb9e12;">Printer version</a>
<a class="t" style="left:163.32px;top:845.00px;font-size:15px;color:#fb9e12;letter-spacing:-0.440px;-webkit-text-stroke:0.18px #fb9e12;">Send by email</a>
<span class="t" style="left:413.22px;top:376.00px;font-size:15px;color:#0d7cc1;font-weight:bold;letter-spacing:-0.377px;">Publication ID:</span>
<span class="t" style="left:413.22px;top:401.00px;font-size:15px;color:#0d7cc1;font-weight:bold;letter-spacing:-0.338px;">Publication Date:</span>
<span class="t" style="left:413.00px;top:426.00px;font-size:15px;color:#0d7cc1;font-weight:bold;letter-spacing:-0.300px;transform:scaleX(0.9274);transform-origin:0 0;">Pages:</span>
<span class="t" style="left:413.48px;top:451.00px;font-size:15px;color:#0d7cc1;font-weight:bold;letter-spacing:-0.300px;transform:scaleX(0.9625);transform-origin:0 0;">Publisher:</span>
<span class="t" style="left:413.72px;top:476.00px;font-size:15px;color:#0d7cc1;font-weight:bold;letter-spacing:-0.300px;transform:scaleX(0.9641);transform-origin:0 0;">Countries:</span>
<span class="t" style="left:543.16px;top:376.00px;font-size:15px;color:#6d6d6d;letter-spacing:-0.300px;transform:scaleX(0.8900);transform-origin:0 0;">PRF04180027</span>
<span class="t" style="left:544.04px;top:401.00px;font-size:15px;color:#6d6d6d;letter-spacing:-0.300px;transform:scaleX(0.9015);transform-origin:0 0;">April 17, 2018</span>
<span class="t" style="left:543.00px;top:426.00px;font-size:15px;color:#6d6d6d;letter-spacing:-0.300px;transform:scaleX(0.8075);transform-origin:0 0;">147</span>
<span class="t" style="left:543.10px;top:451.00px;font-size:15px;color:#6d6d6d;letter-spacing:-0.300px;transform:scaleX(0.9481);transform-origin:0 0;">Prof Research</span>
<a class="t" style="left:543.51px;top:476.00px;font-size:15px;color:#fb9e12;letter-spacing:-0.449px;-webkit-text-stroke:0.18px #fb9e12;">Global</a>
<a class="t" style="left:543.69px;top:501.00px;font-size:15px;color:#fb9e12;letter-spacing:-0.300px;-webkit-text-stroke:0.18px #fb9e12;transform:scaleX(0.9141);transform-origin:0 0;">China</a>
<span class="t" style="left:689.74px;top:525.32px;font-size:18px;color:#b5162b;font-weight:bold;letter-spacing:0.459px;">$3,000.00</span>
<span class="t" style="left:413.06px;top:551.00px;font-size:15.5px;color:#747677;letter-spacing:-0.310px;transform:scaleX(0.9623);transform-origin:0 0;">Publication License Type</span>
<span class="t" style="left:574.83px;top:552.00px;font-size:13px;color:#ee1111;font-weight:bold;">*</span>
<span class="t" style="left:468.51px;top:603.00px;font-size:15.5px;color:#222222;letter-spacing:-0.310px;transform:scaleX(0.8561);transform-origin:0 0;">SINGLE USER LICENSE (PDF), $3,000.00</span>
<span class="t" style="left:468.51px;top:670.00px;font-size:15.5px;color:#222222;letter-spacing:-0.310px;transform:scaleX(0.8590);transform-origin:0 0;">SITE LICENSE (PDF), $3,800.00</span>
<span class="t" style="left:468.64px;top:737.00px;font-size:15.5px;color:#222222;letter-spacing:-0.310px;transform:scaleX(0.8777);transform-origin:0 0;">GLOBAL LICENSE (PDF), $5,000.00</span>
<span class="t" style="left:413.45px;top:788.00px;font-size:15.3px;color:#747677;letter-spacing:-0.435px;">Please choose the suitable license type from above.</span>
<span class="t" style="left:413.45px;top:813.00px;font-size:15.3px;color:#747677;letter-spacing:-0.410px;">More details are at given under tab "Report License</span>
<span class="t" style="left:414.26px;top:838.00px;font-size:15.3px;color:#747677;letter-spacing:-0.306px;transform:scaleX(0.9756);transform-origin:0 0;">Types" below.</span>
<span class="t" style="left:531.30px;top:893.32px;font-size:16px;color:#ffffff;font-weight:bold;letter-spacing:0.192px;-webkit-text-stroke:0.5px #ffffff;transform:scaleX(1.0972);transform-origin:0 0;">ADD TO CART</span>
<span class="t" style="left:873.45px;top:393.82px;font-size:23.4px;color:#1c3a52;letter-spacing:0.399px;">Why to buy from us?</span>
<span class="t" style="left:837.19px;top:463.00px;font-size:17px;color:#ffffff;letter-spacing:0.045px;-webkit-text-stroke:0.4px #ffffff;">Globally Trusted Brand</span>
<span class="t" style="left:834.58px;top:624.50px;font-size:17px;color:#ffffff;letter-spacing:0.171px;-webkit-text-stroke:0.4px #ffffff;">Shop With Confidence</span>
<span class="t" style="left:834.58px;top:688.00px;font-size:17px;color:#ffffff;letter-spacing:-0.077px;-webkit-text-stroke:0.4px #ffffff;">Secure Checkout</span>
<span class="t" style="left:832.39px;top:752.00px;font-size:17px;color:#ffffff;letter-spacing:0.170px;-webkit-text-stroke:0.4px #ffffff;">Frequently Asked Questions</span>
<span class="t" style="left:819.06px;top:513.00px;font-size:15.3px;color:#747677;letter-spacing:-0.343px;">We help executives from</span>
<a class="t" style="left:981.48px;top:513.00px;font-size:15.3px;color:#fb9e12;letter-spacing:-0.393px;-webkit-text-stroke:0.18px #fb9e12;">Fortune 500</a>
<span class="t" style="left:1064.52px;top:513.00px;font-size:15.3px;color:#747677;letter-spacing:-0.380px;">firms to</span>
<span class="t" style="left:818.06px;top:538.00px;font-size:15.3px;color:#747677;letter-spacing:-0.332px;">Start-ups with their market research needs thus we</span>
<span class="t" style="left:818.53px;top:563.00px;font-size:15.3px;color:#747677;letter-spacing:-0.330px;">can help you too.</span>

</div>
</body>
</html>
